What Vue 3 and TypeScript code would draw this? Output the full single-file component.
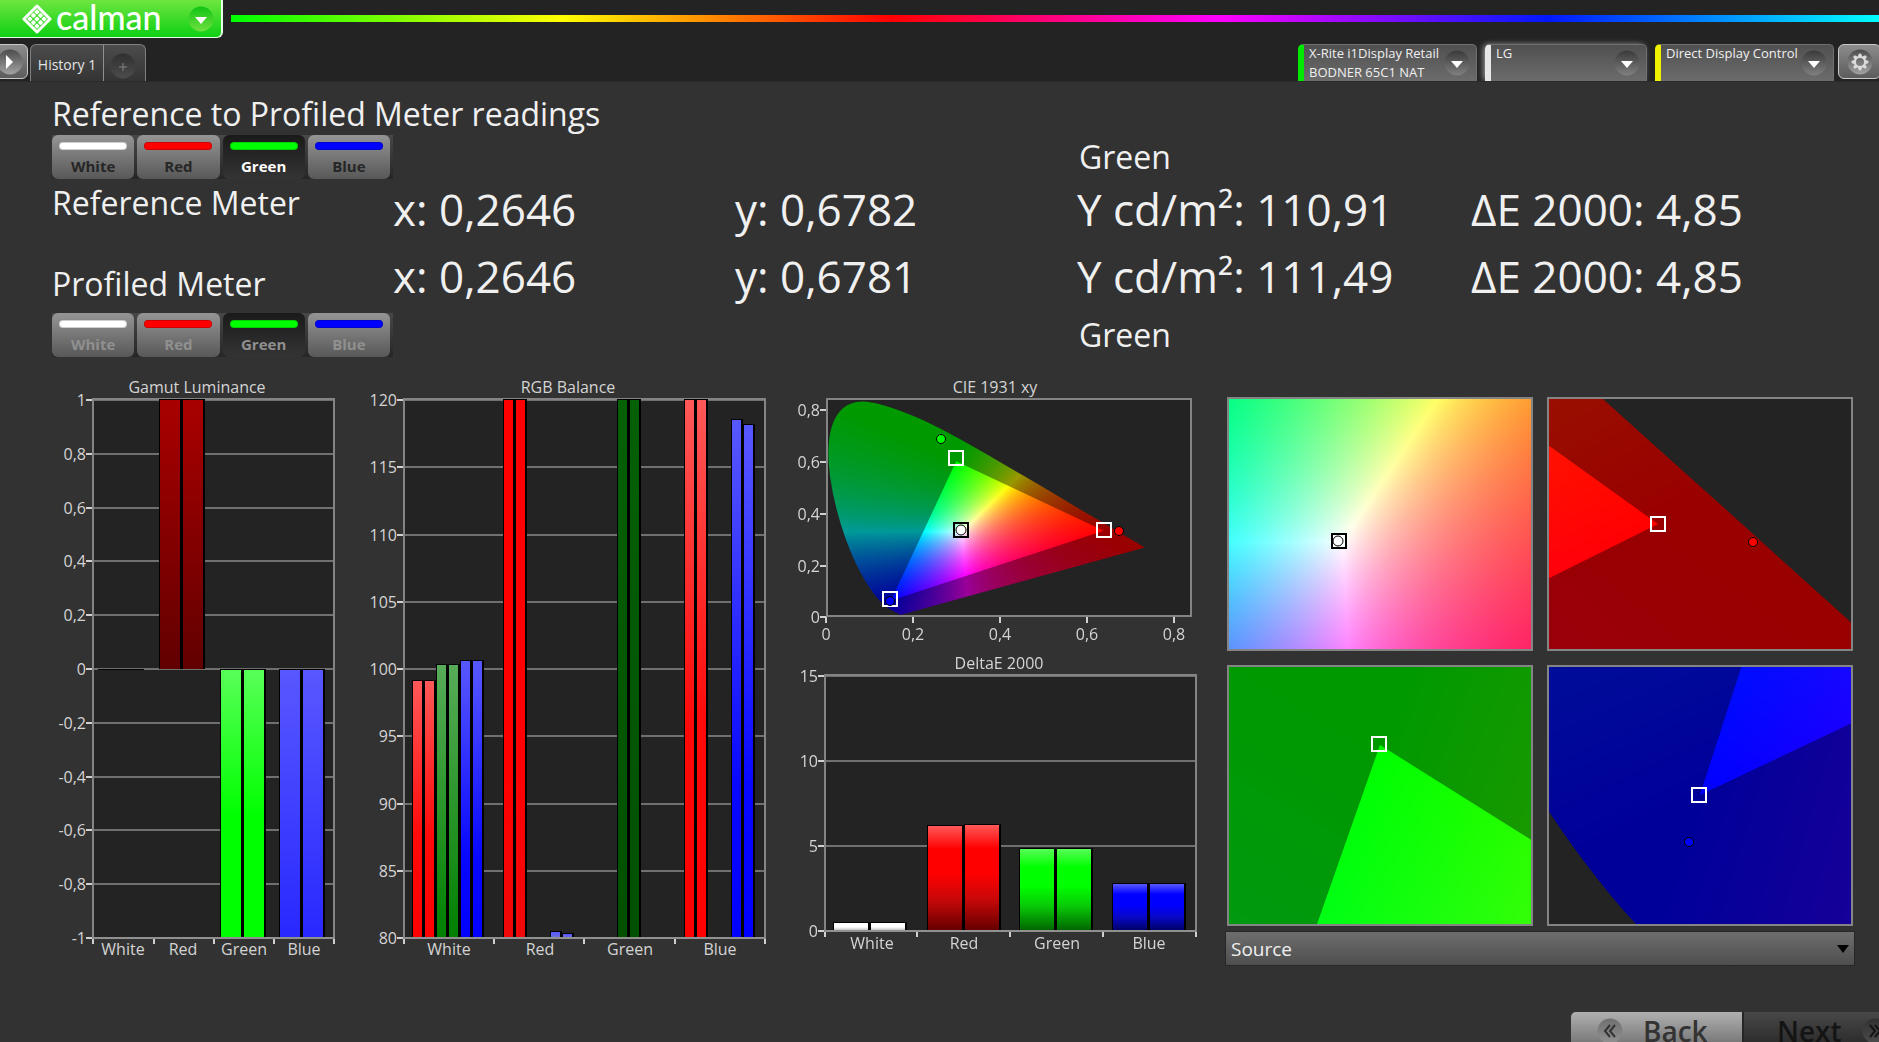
<script setup lang="ts">
import { onMounted, ref } from 'vue'

interface Patch { name: string; color: string }
interface Bar { x: number; w: number; top: number; bottom: number; fill: string }
interface Label { at: number; text: string }
interface Chart {
  title: string
  titleX: number
  titleY: number
  width: number
  height: number
  plot: { x: number; y: number; w: number; h: number }
  labelX: number
  rows: Label[]
  ticks: number[]
  categories: Label[]
  categoryY: number
  bars: Bar[]
}
interface Marker { kind: 'square' | 'dot'; x: number; y: number; color: string }
interface Field {
  name: string
  width: number
  height: number
  originX: number
  originY: number
  scaleX: number
  scaleY: number
  markers: Marker[]
}

const patches: Patch[] = [
  { name: 'White', color: '#ffffff' },
  { name: 'Red', color: '#ff0000' },
  { name: 'Green', color: '#00ff00' },
  { name: 'Blue', color: '#0000ff' },
]
const selected = ref('Green')

const readings = [
  ['x: 0,2646', 'y: 0,6782', 'Y cd/m²: 110,91', 'ΔE 2000: 4,85'],
  ['x: 0,2646', 'y: 0,6781', 'Y cd/m²: 111,49', 'ΔE 2000: 4,85'],
]

const devices = [
  { lines: ['X-Rite i1Display Retail', 'BODNER 65C1 NAT'], tone: 'green', size: 'wide' },
  { lines: ['LG'], tone: 'white', size: 'narrow' },
  { lines: ['Direct Display Control'], tone: 'yellow', size: 'wide' },
]

function spread(texts: string[], from: number, to: number): Label[] {
  const step = (to - from) / (texts.length - 1)
  return texts.map((text, i) => ({ text, at: Math.round(from + step * i) }))
}

function pair(x: number, w: number, tops: [number, number], bottom: number, fill: string): Bar[] {
  return [
    { x, w, top: tops[0], bottom, fill },
    { x: x + w, w, top: tops[1], bottom, fill },
  ]
}

const luminance: Chart = {
  title: 'Gamut Luminance', titleX: 157, titleY: 22, width: 320, height: 600,
  plot: { x: 53, y: 28, w: 241, h: 539 },
  labelX: 46,
  rows: spread(['1', '0,8', '0,6', '0,4', '0,2', '0', '-0,2', '-0,4', '-0,6', '-0,8', '-1'], 29, 567),
  ticks: [53, 114, 174, 234, 294],
  categories: [{ text: 'White', at: 83 }, { text: 'Red', at: 143 }, { text: 'Green', at: 204 }, { text: 'Blue', at: 264 }],
  categoryY: 584,
  bars: [
    ...pair(58, 23, [298, 298], 299, 'black'),
    ...pair(119, 23, [28, 28], 298, 'deepRed'),
    ...pair(180, 23, [298, 298], 567, 'limeFade'),
    ...pair(239, 23, [298, 298], 567, 'blueFade'),
  ],
}

const balance: Chart = {
  title: 'RGB Balance', titleX: 208, titleY: 22, width: 420, height: 600,
  plot: { x: 44, y: 28, w: 361, h: 539 },
  labelX: 37,
  rows: spread(['120', '115', '110', '105', '100', '95', '90', '85', '80'], 29, 567),
  ticks: [44, 134, 224, 315, 405],
  categories: [{ text: 'White', at: 89 }, { text: 'Red', at: 180 }, { text: 'Green', at: 270 }, { text: 'Blue', at: 360 }],
  categoryY: 584,
  bars: [
    ...pair(52, 12, [309, 309], 567, 'redFade'),
    ...pair(76, 12, [293, 293], 567, 'mossFade'),
    ...pair(100, 12, [289, 289], 567, 'pureBlue'),
    ...pair(143, 12, [28, 28], 567, 'flatRed'),
    ...pair(190, 12, [560, 562], 567, 'paleBlue'),
    ...pair(257, 12, [28, 28], 567, 'forest'),
    ...pair(324, 12, [28, 28], 567, 'redFade'),
    ...pair(371, 12, [48, 53], 567, 'pureBlue'),
  ],
}

const deltaE: Chart = {
  title: 'DeltaE 2000', titleX: 219, titleY: 28, width: 430, height: 330,
  plot: { x: 45, y: 34, w: 371, h: 256 },
  labelX: 38,
  rows: spread(['15', '10', '5', '0'], 35, 290),
  ticks: [45, 137, 230, 323, 416],
  categories: [{ text: 'White', at: 92 }, { text: 'Red', at: 184 }, { text: 'Green', at: 277 }, { text: 'Blue', at: 369 }],
  categoryY: 308,
  bars: [
    ...pair(53, 37, [281, 281], 290, 'whiteGloss'),
    ...pair(147, 37, [184, 183], 290, 'redGloss'),
    ...pair(239, 37, [207, 207], 290, 'greenGloss'),
    ...pair(332, 37, [242, 242], 290, 'blueGloss'),
  ],
}

const gradients: { id: string; stops: [number, string][] }[] = [
  { id: 'black', stops: [[0, '#000'], [1, '#000']] },
  { id: 'deepRed', stops: [[0, '#a90000'], [1, '#620000']] },
  { id: 'limeFade', stops: [[0, '#58ff58'], [0.55, '#00ff00'], [1, '#00ff00']] },
  { id: 'blueFade', stops: [[0, '#5858ff'], [1, '#2828ff']] },
  { id: 'redFade', stops: [[0, '#ff5858'], [0.6, '#ff0a0a'], [1, '#ff0000']] },
  { id: 'mossFade', stops: [[0, '#58ac58'], [1, '#008000']] },
  { id: 'pureBlue', stops: [[0, '#5858ff'], [0.7, '#0808ff'], [1, '#0000ff']] },
  { id: 'flatRed', stops: [[0, '#ff0000'], [0.7, '#ff0000'], [1, '#f00808']] },
  { id: 'paleBlue', stops: [[0, '#5858ff'], [1, '#7070d8']] },
  { id: 'forest', stops: [[0, '#066006'], [1, '#005000']] },
  { id: 'whiteGloss', stops: [[0, '#fff'], [0.5, '#fff'], [1, '#b0b0b0']] },
  { id: 'redGloss', stops: [[0, '#ff5858'], [0.22, '#ff0000'], [0.45, '#ff0000'], [0.7, '#c80808'], [1, '#620000']] },
  { id: 'greenGloss', stops: [[0, '#58ff58'], [0.22, '#00ff00'], [0.45, '#00ff00'], [0.7, '#08c808'], [1, '#006200']] },
  { id: 'blueGloss', stops: [[0, '#5858ff'], [0.22, '#0000ff'], [0.45, '#0000ff'], [0.7, '#0808c8'], [1, '#000062']] },
]

// CIE 1931 spectral locus, 400 nm to 700 nm
const locus: [number, number][] = [
  [0.1733, 0.0048], [0.1714, 0.0051], [0.1689, 0.0069], [0.1644, 0.0109], [0.1611, 0.0138], [0.1566, 0.0177],
  [0.151, 0.0227], [0.144, 0.0297], [0.1355, 0.0399], [0.1241, 0.0578], [0.1096, 0.0868], [0.0913, 0.1327],
  [0.0687, 0.2007], [0.0454, 0.295], [0.0235, 0.4127], [0.0082, 0.5384], [0.0039, 0.6548], [0.0139, 0.7502],
  [0.0389, 0.812], [0.0743, 0.8338], [0.1142, 0.8262], [0.1547, 0.8059], [0.1929, 0.7816], [0.2296, 0.7543],
  [0.2658, 0.7243], [0.3016, 0.6923], [0.3373, 0.6589], [0.3731, 0.6245], [0.4087, 0.5896], [0.4441, 0.5547],
  [0.4788, 0.5202], [0.5125, 0.4866], [0.5448, 0.4544], [0.5752, 0.4242], [0.6029, 0.3965], [0.627, 0.3725],
  [0.6482, 0.3514], [0.6658, 0.334], [0.6915, 0.3083], [0.7079, 0.292], [0.719, 0.2809], [0.726, 0.274], [0.7347, 0.2653],
]
const gamut: [number, number][] = [[0.64, 0.33], [0.3, 0.6], [0.15, 0.06]]

// `at` is the field pixel that shows the chromaticity `xy`; scale is pixels per unit of x and y
function fieldAt(name: string, width: number, height: number, at: [number, number], xy: [number, number], scale: [number, number], markers: Marker[]): Field {
  return {
    name, width, height,
    originX: at[0] - xy[0] * scale[0],
    originY: at[1] + xy[1] * scale[1],
    scaleX: scale[0], scaleY: scale[1], markers,
  }
}

const fields: Field[] = [
  fieldAt('CIE 1931 xy', 366, 219, [0, 218], [0, 0], [434, 258], [
    { kind: 'square', x: 130, y: 60, color: '#fff' },
    { kind: 'square', x: 278, y: 132, color: '#fff' },
    { kind: 'square', x: 64, y: 201, color: '#fff' },
    { kind: 'square', x: 135, y: 132, color: '#000' },
    { kind: 'dot', x: 115, y: 41, color: '#00ff00' },
    { kind: 'dot', x: 293, y: 133, color: '#ff0000' },
    { kind: 'dot', x: 64, y: 203, color: '#0000ff' },
    { kind: 'dot', x: 135, y: 132, color: '#ffffff' },
  ]),
  fieldAt('White point', 306, 254, [115, 144], [0.3127, 0.329], [1860, 1690], [
    { kind: 'square', x: 112, y: 144, color: '#000' },
    { kind: 'dot', x: 111, y: 144, color: '#ffffff' },
  ]),
  fieldAt('Red point', 306, 254, [111, 127], [0.64, 0.33], [2817, 2550], [
    { kind: 'square', x: 111, y: 127, color: '#fff' },
    { kind: 'dot', x: 206, y: 145, color: '#ff0000' },
  ]),
  fieldAt('Green point', 306, 261, [153, 80], [0.3, 0.6], [5430, 4290], [
    { kind: 'square', x: 152, y: 79, color: '#fff' },
  ]),
  fieldAt('Blue point', 306, 261, [153, 130], [0.15, 0.06], [6050, 5200], [
    { kind: 'square', x: 152, y: 130, color: '#fff' },
    { kind: 'dot', x: 142, y: 177, color: '#0000ff' },
  ]),
]
const overview = fields[0]
const closeups = fields.slice(1)
const xLabels: Label[] = [{ at: 46, text: '0' }, { at: 133, text: '0,2' }, { at: 220, text: '0,4' }, { at: 307, text: '0,6' }, { at: 394, text: '0,8' }]
const yLabels: Label[] = [{ at: 39, text: '0,8' }, { at: 91, text: '0,6' }, { at: 143, text: '0,4' }, { at: 195, text: '0,2' }, { at: 246, text: '0' }]

function chromaticity(x: number, y: number): [number, number, number] {
  const yy = Math.max(y, 0.0001)
  const X = x / yy
  const Z = (1 - x - yy) / yy
  const r = Math.max(0, 3.2406 * X - 1.5372 - 0.4986 * Z)
  const g = Math.max(0, -0.9689 * X + 1.8758 + 0.0415 * Z)
  const b = Math.max(0, 0.0557 * X - 0.204 + 1.057 * Z)
  const top = Math.max(r, g, b, 0.0001)
  return [r / top, g / top, b / top]
}

function layer(field: Field, level: number): HTMLCanvasElement {
  const canvas = document.createElement('canvas')
  canvas.width = field.width
  canvas.height = field.height
  const context = canvas.getContext('2d')!
  const image = context.createImageData(field.width, field.height)
  for (let row = 0; row < field.height; row++) {
    for (let col = 0; col < field.width; col++) {
      const rgb = chromaticity((col - field.originX) / field.scaleX, (field.originY - row) / field.scaleY)
      const i = (row * field.width + col) * 4
      for (let c = 0; c < 3; c++) image.data[i + c] = Math.round(rgb[c] * 255 * level)
      image.data[i + 3] = 255
    }
  }
  context.putImageData(image, 0, 0)
  return canvas
}

function paint(canvas: HTMLCanvasElement, field: Field) {
  const context = canvas.getContext('2d')!
  const place = ([x, y]: [number, number]): [number, number] => [field.originX + x * field.scaleX, field.originY - y * field.scaleY]
  context.fillStyle = '#232323'
  context.fillRect(0, 0, field.width, field.height)

  context.save()
  context.beginPath()
  const points = locus.map(place)
  context.moveTo(...points[0])
  for (let i = 1; i < points.length - 1; i++) {
    const [x, y] = points[i]
    const [nx, ny] = points[i + 1]
    context.quadraticCurveTo(x, y, (x + nx) / 2, (y + ny) / 2)
  }
  context.lineTo(...points[points.length - 1])
  context.closePath()
  context.clip()
  context.drawImage(layer(field, 0.6), 0, 0)
  context.restore()

  context.save()
  context.beginPath()
  gamut.map(place).forEach(([x, y]) => context.lineTo(x, y))
  context.closePath()
  context.clip()
  context.drawImage(layer(field, 1), 0, 0)
  context.restore()
}

const root = ref<HTMLElement | null>(null)
onMounted(() => {
  root.value?.querySelectorAll<HTMLCanvasElement>('canvas').forEach((canvas) => {
    const field = fields.find((f) => f.name === canvas.dataset.field)
    if (field) paint(canvas, field)
  })
})
</script>

<template>
  <div ref="root" class="app">
    <header class="top">
      <div class="brand-row">
        <button class="brand" type="button">
          <svg class="mark" width="30" height="30" viewBox="0 0 30 30" aria-hidden="true">
            <g fill="none" stroke="#fff" stroke-width="3" stroke-linejoin="round" stroke-linecap="round">
              <path d="M9 8 L15 2 L21 8" /><path d="M22 9 L28 15 L22 21" /><path d="M21 22 L15 28 L9 22" /><path d="M8 21 L2 15 L8 9" />
            </g>
            <g fill="#fff">
              <rect v-for="n in 9" :key="n" :x="(n - 1) % 3 * 5 + 8" :y="Math.floor((n - 1) / 3) * 5 + 8" width="4" height="4" rx="1" transform="rotate(45 15 15)" />
            </g>
          </svg>
          <span class="wordmark">calman</span>
          <svg class="brand-arrow" width="26" height="26" viewBox="0 0 26 26" aria-hidden="true">
            <defs><linearGradient id="brandDisc" x1="0" y1="0" x2="0" y2="1"><stop offset="0" stop-color="#10c414" /><stop offset="1" stop-color="#6fe040" /></linearGradient></defs>
            <circle cx="13" cy="13" r="12.5" fill="url(#brandDisc)" /><path d="M7 11H19L13 18Z" fill="#fff" />
          </svg>
        </button>
        <div class="spectrum"></div>
      </div>
      <div class="tab-row">
        <button class="square play" type="button" aria-label="Expand">
          <svg width="26" height="26" viewBox="0 0 26 26"><circle cx="13" cy="13" r="12.5" fill="url(#disc)" /><path d="M9 6V20L16 13Z" fill="#fff" /></svg>
        </button>
        <nav class="tabs">
          <button class="tab" type="button">History 1</button>
          <button class="add" type="button" aria-label="Add tab">
            <svg width="26" height="26" viewBox="0 0 26 26"><circle cx="13" cy="13" r="12.5" fill="url(#darkDisc)" /><path d="M9 14H17M13 10V18" stroke="#858585" /></svg>
          </button>
        </nav>
        <div class="devices">
          <button v-for="device in devices" :key="device.tone" type="button" class="device" :class="[device.tone, device.size]">
            <span class="device-text"><span v-for="line in device.lines" :key="line">{{ line }}</span></span>
            <svg width="26" height="26" viewBox="0 0 26 26" aria-hidden="true"><circle cx="13" cy="13" r="12.5" fill="url(#darkDisc2)" /><path d="M7 11H19L13 18Z" fill="#fff" /></svg>
          </button>
          <button class="square gear" type="button" aria-label="Settings">
            <svg width="26" height="26" viewBox="0 0 26 26">
              <circle cx="13" cy="13" r="12.5" fill="url(#disc)" />
              <circle cx="13" cy="13" r="5" fill="none" stroke="#dcdcdc" stroke-width="2" />
              <path v-for="n in 8" :key="n" d="M11.500 7.500L12.200 5H13.800L14.500 7.500Z" fill="#dcdcdc" stroke="#dcdcdc" :transform="`rotate(${n * 45} 13 13)`" />
            </svg>
          </button>
        </div>
      </div>
    </header>

    <main>
      <section class="readings">
        <div class="meters">
          <h1>Reference to Profiled Meter readings</h1>
          <div class="patches">
            <button v-for="p in patches" :key="p.name" type="button" :class="{ on: selected === p.name }" @click="selected = p.name">
              <i :style="{ background: p.color }"></i>{{ p.name }}
            </button>
          </div>
          <h2>Reference Meter</h2>
          <h2 class="profiled">Profiled Meter</h2>
          <div class="patches second">
            <button v-for="p in patches" :key="p.name" type="button" disabled :class="{ on: selected === p.name }">
              <i :style="{ background: p.color }"></i>{{ p.name }}
            </button>
          </div>
        </div>
        <div class="values">
          <p class="patch-name">{{ selected }}</p>
          <template v-for="(row, i) in readings" :key="i">
            <p v-for="value in row" :key="value" class="value">{{ value }}</p>
          </template>
          <p class="patch-name last">{{ selected }}</p>
        </div>
      </section>

      <section class="charts">
        <svg width="0" height="0" class="defs" aria-hidden="true">
          <defs>
            <linearGradient v-for="g in gradients" :id="g.id" :key="g.id" x1="0" y1="0" x2="0" y2="1">
              <stop v-for="s in g.stops" :key="s[0]" :offset="s[0]" :stop-color="s[1]" />
            </linearGradient>
            <linearGradient id="disc" x1="0" y1="0" x2="0" y2="1"><stop offset="0" stop-color="#4c4c4c" /><stop offset="1" stop-color="#a2a2a2" /></linearGradient>
            <linearGradient id="darkDisc" x1="0" y1="0" x2="0" y2="1"><stop offset="0" stop-color="#303030" /><stop offset="1" stop-color="#4c4c4c" /></linearGradient>
            <linearGradient id="darkDisc2" x1="0" y1="0" x2="0" y2="1"><stop offset="0" stop-color="#3a3a3a" /><stop offset="1" stop-color="#808080" /></linearGradient>
          </defs>
        </svg>
        <div v-for="(chart, index) in [luminance, balance, deltaE]" :key="chart.title" class="cell">
          <svg v-if="index === 2" class="chart" viewBox="0 0 430 270" role="img" aria-label="CIE 1931 xy">
            <text x="215" y="22" text-anchor="middle">CIE 1931 xy</text>
            <foreignObject x="46" y="27" width="366" height="219"><canvas :data-field="overview.name" width="366" height="219"></canvas></foreignObject>
            <rect x="47" y="28" width="364" height="217" class="frame" />
            <g v-for="l in yLabels" :key="'y' + l.text"><path class="tick" :d="`M40 ${l.at}H46`" /><text x="40" :y="l.at + 6" text-anchor="end">{{ l.text }}</text></g>
            <g v-for="l in xLabels" :key="'x' + l.text"><path class="tick" :d="`M${l.at} 246V252`" /><text :x="l.at" y="269" text-anchor="middle">{{ l.text }}</text></g>
            <g transform="translate(46 27)">
              <template v-for="(m, i) in overview.markers" :key="i">
                <rect v-if="m.kind === 'square'" :x="m.x - 7" :y="m.y - 7" width="14" height="14" fill="none" :stroke="m.color" stroke-width="2" />
                <circle v-else :cx="m.x" :cy="m.y" :r="m.color === '#ffffff' ? 5 : 4.5" :fill="m.color" stroke="#000" />
              </template>
            </g>
          </svg>
          <svg class="chart" :viewBox="`0 0 ${chart.width} ${chart.height}`" role="img" :aria-label="chart.title">
            <text :x="chart.titleX" :y="chart.titleY" text-anchor="middle">{{ chart.title }}</text>
            <g shape-rendering="crispEdges">
              <rect :x="chart.plot.x" :y="chart.plot.y" :width="chart.plot.w" :height="chart.plot.h" fill="#232323" />
              <path v-for="r in chart.rows" :key="r.text" class="grid" :d="`M${chart.plot.x} ${r.at}H${chart.plot.x + chart.plot.w}`" />
              <rect :x="chart.plot.x" :y="chart.plot.y" :width="chart.plot.w" :height="chart.plot.h" class="frame" />
              <g v-for="(b, i) in chart.bars" :key="i">
                <rect :x="b.x" :y="b.top" :width="b.w" :height="b.bottom - b.top" fill="#000" />
                <rect :x="b.x + 1" :y="b.top + 1" :width="b.w - 3" :height="Math.max(0, b.bottom - b.top - 1)" :fill="`url(#${b.fill})`" />
              </g>
              <path class="axis" :d="`M${chart.plot.x} ${chart.plot.y + chart.plot.h}H${chart.plot.x + chart.plot.w}`" />
              <path v-for="r in chart.rows" :key="'t' + r.text" class="tick" :d="`M${chart.labelX} ${r.at}H${chart.plot.x - 1}`" />
              <path v-for="t in chart.ticks" :key="t" class="tick" :d="`M${t} ${chart.plot.y + chart.plot.h + 1}v5`" />
            </g>
            <text v-for="r in chart.rows" :key="'l' + r.text" :x="chart.labelX" :y="r.at + 6" text-anchor="end">{{ r.text }}</text>
            <text v-for="c in chart.categories" :key="c.text" :x="c.at" :y="chart.categoryY" text-anchor="middle">{{ c.text }}</text>
          </svg>
        </div>
        <div class="closeups">
          <div class="windows">
            <svg v-for="f in closeups" :key="f.name" class="chart" :viewBox="`0 0 ${f.width} ${f.height}`" role="img" :aria-label="f.name">
              <foreignObject x="0" y="0" :width="f.width" :height="f.height"><canvas :data-field="f.name" :width="f.width" :height="f.height"></canvas></foreignObject>
              <rect x="1" y="1" :width="f.width - 2" :height="f.height - 2" class="frame" />
              <template v-for="(m, i) in f.markers" :key="i">
                <rect v-if="m.kind === 'square'" :x="m.x - 7" :y="m.y - 7" width="14" height="14" :fill="m.color === '#000' ? '#fff' : 'none'" :stroke="m.color" stroke-width="2" />
                <circle v-else :cx="m.x" :cy="m.y" :r="m.color === '#ffffff' ? 5 : 4.5" :fill="m.color" stroke="#000" />
              </template>
            </svg>
          </div>
          <div class="picker">
            <select aria-label="Pattern source"><option>Source</option></select>
            <svg width="12" height="8" viewBox="0 0 12 8" aria-hidden="true"><path d="M0 0H12L6 8Z" fill="#000" /></svg>
          </div>
        </div>
      </section>
    </main>

    <footer>
      <button class="back" type="button">
        <svg width="26" height="26" viewBox="0 0 26 26" aria-hidden="true"><circle cx="13" cy="13" r="12.500" fill="url(#disc)" opacity="0.6" /><path d="M13 7L8 13L13 19M18 7L13 13L18 19" fill="none" stroke="#333" stroke-width="2" /></svg>
        Back
      </button>
      <button class="next" type="button">
        Next
        <svg width="26" height="26" viewBox="0 0 26 26" aria-hidden="true"><circle cx="13" cy="13" r="12.500" fill="url(#darkDisc)" /><path d="M8 7L13 13L8 19M13 7L18 13L13 19" fill="none" stroke="#141414" stroke-width="2" /></svg>
      </button>
    </footer>
  </div>
</template>

<style>
body {
  background: #323232;
}
</style>

<style scoped>
.app {
  height: 100vh;
  display: flex;
  flex-direction: column;
  overflow: hidden;
  background: #323232;
  color: #f0f0f0;
  font-family: "Open Sans", "Noto Sans", sans-serif;
}
button {
  font-family: inherit;
  border: 0;
  padding: 0;
  cursor: pointer;
}
h1, h2, p {
  margin: 0;
  font-weight: 400;
}
svg {
  display: block;
  flex: none;
}
.top {
  background: #232323;
  border-bottom: 1px solid #2b2b2b;
  overflow: hidden;
}
.brand-row {
  display: flex;
  align-items: flex-start;
}
.brand {
  display: flex;
  align-items: center;
  box-sizing: border-box;
  width: 223px;
  height: 38px;
  padding: 0 7px 0 22px;
  border-right: 2px solid #e4ffe4;
  border-bottom: 1px solid #e4ffe4;
  border-radius: 0 0 6px 0;
  background: linear-gradient(#6ee640, #0ed014);
  color: #fff;
}
.wordmark {
  margin: -4px auto 0 4px;
  font: 500 34px/36px Lato, sans-serif;
}
.spectrum {
  flex: 1;
  height: 7px;
  margin: 15px 0 0 8px;
  background: linear-gradient(90deg, #00ff00, #ffff00, #ff0000, #ff00ff, #0018ff 80%, #00ffff);
}
.tab-row {
  display: flex;
  height: 37px;
  margin-top: 6px;
}
.square {
  display: flex;
  align-items: center;
  box-sizing: border-box;
  height: 35px;
  border: 1px solid #c8c8c8;
  border-radius: 6px;
  background: linear-gradient(#8c8c8c, #5c5c5c);
}
.play {
  width: 38px;
  margin-left: -10px;
  padding-left: 6px;
}
.tabs {
  display: flex;
  box-sizing: border-box;
  margin-left: 2px;
  border: 1px solid #808080;
  border-bottom: 0;
  border-radius: 6px 6px 0 0;
  background: linear-gradient(#4c4c4c, #343434);
}
.tab {
  width: 73px;
  padding-top: 2px;
  border-right: 1px solid #909090;
  background: none;
  color: #e4e4e4;
  font-size: 14px;
}
.add {
  width: 41px;
  padding: 6px 0 0 6px;
  background: none;
}
.devices {
  display: flex;
  margin-left: auto;
  margin-right: -2px;
}
.device {
  display: flex;
  align-items: center;
  justify-content: space-between;
  box-sizing: border-box;
  margin-right: 8px;
  padding: 0 6px 0 5px;
  border: 1px solid #707070;
  border-bottom: 0;
  border-left: 6px solid #00e800;
  border-radius: 5px 5px 0 0;
  background: linear-gradient(#505050, #6c6c6c);
  color: #f0f0f0;
}
.wide {
  width: 179px;
}
.narrow {
  width: 162px;
}
.white {
  border-left-color: #e8e8e8;
  box-shadow: -2px 0 6px -1px #b0b0b0;
}
.yellow {
  margin-right: 4px;
  border-left-color: #f0f000;
}
.device-text {
  display: flex;
  flex-direction: column;
  align-self: flex-start;
  margin-top: -1px;
  font-size: 13px;
  line-height: 19px;
  text-align: left;
  white-space: nowrap;
}
.device svg {
  margin-left: -8px;
}
.gear {
  width: 43px;
  padding-left: 8px;
}
.readings {
  display: grid;
  grid-template-columns: 341fr 1486fr;
  padding: 12px 0 0 52px;
}
h1, h2 {
  font-size: 32px;
  line-height: 40px;
  white-space: nowrap;
}
.meters {
  min-width: 0;
}
.patches {
  display: grid;
  grid-template-columns: repeat(4, 1fr);
  column-gap: 3px;
  margin: 1px 0 4px;
  padding-right: 3px;
  background: linear-gradient(#484848, #262626);
}
.patches button {
  display: flex;
  flex-direction: column;
  align-items: center;
  height: 44px;
  border-radius: 6px;
  background: linear-gradient(#959595, #585858);
  color: #262626;
  font-size: 15px;
  font-weight: 700;
  line-height: 20px;
}
.patches i {
  width: 68px;
  height: 8px;
  margin: 7px 0 6px;
  box-sizing: border-box;
  border: 1px solid #00000030;
  border-radius: 4px;
}
.patches .on {
  background: linear-gradient(#1a1a1a, #343434);
  color: #fff;
}
.patches button:disabled {
  color: #909090;
}
.profiled {
  margin-top: 41px;
}
.second {
  margin: 9px 0 0;
}
.values {
  display: grid;
  grid-template-columns: 342fr 342fr 394fr 408fr;
  align-content: start;
  padding-top: 44px;
}
.value {
  font-size: 44px;
  line-height: 67px;
  white-space: nowrap;
}
.patch-name {
  grid-column: 3 / 5;
  padding-left: 2px;
  font-size: 32px;
  line-height: 38px;
}
.last {
  margin-top: 6px;
}
.charts {
  display: grid;
  grid-template-columns: 320fr 420fr 430fr 669fr;
  padding: 14px 0 0 40px;
}
.defs {
  position: absolute;
}
.cell {
  min-width: 0;
}
.chart {
  width: 100%;
  height: auto;
  overflow: visible;
}
.chart text {
  fill: #d4d4d4;
  font-size: 16px;
}
.chart canvas {
  display: block;
}
.frame {
  fill: none;
  stroke: #848484;
  stroke-width: 2px;
}
.grid {
  stroke: #707070;
  stroke-width: 2px;
}
.axis {
  stroke: #909090;
  stroke-width: 2px;
}
.tick {
  stroke: #d0d0d0;
  stroke-width: 2px;
}
.closeups {
  padding: 26px 24px 0 15px;
}
.windows {
  display: grid;
  grid-template-columns: 1fr 1fr;
  gap: 14px;
  padding: 0 2px;
}
.picker {
  display: flex;
  align-items: center;
  margin-top: 5px;
}
.picker select {
  flex: 1;
  appearance: none;
  height: 35px;
  padding: 0 5px;
  border: 1px solid #262626;
  border-radius: 0;
  background: linear-gradient(#6e6e6e, #4e4e4e);
  color: #f0f0f0;
  font: 19px "Open Sans", sans-serif;
}
.picker svg {
  margin-left: -18px;
  margin-right: 6px;
  pointer-events: none;
}
footer {
  display: flex;
  justify-content: flex-end;
  height: 30px;
  margin-top: auto;
  overflow: hidden;
}
footer button {
  display: flex;
  align-items: center;
  box-sizing: border-box;
  flex: none;
  height: 38px;
  color: #333;
  font-size: 28px;
  font-weight: 600;
  line-height: 38px;
}
.back {
  gap: 20px;
  width: 171px;
  padding-left: 26px;
  border-radius: 5px 0 0 0;
  background: linear-gradient(#b0b0b0, #6c6c6c);
}
.next {
  gap: 20px;
  width: 172px;
  margin-right: -35px;
  padding-left: 33px;
  border-left: 2px solid #262626;
  background: linear-gradient(#484848, #262626);
}
footer .next {
  color: #141414;
}
</style>
